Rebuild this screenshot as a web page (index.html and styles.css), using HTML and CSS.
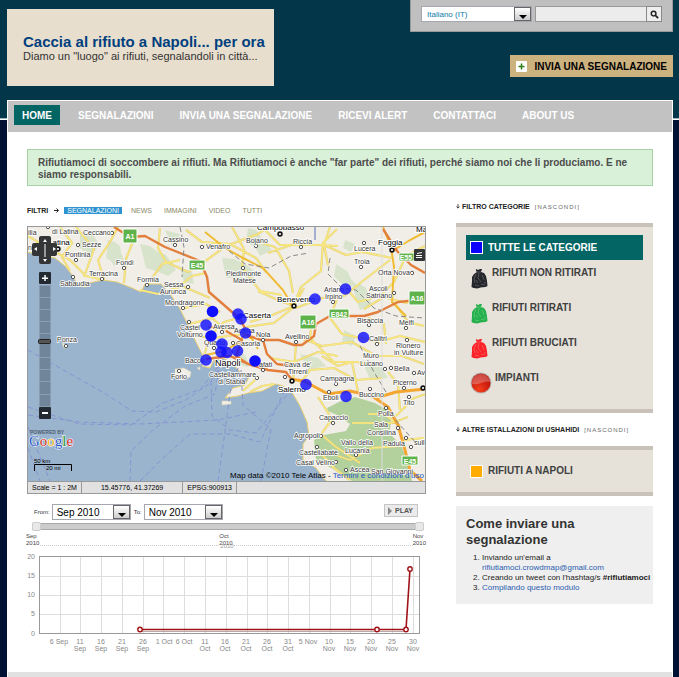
FILE: index.html
```html
<!DOCTYPE html>
<html lang="it">
<head>
<meta charset="utf-8">
<title>Caccia al rifiuto a Napoli</title>
<link rel="stylesheet" href="styles.css">
</head>
<body>
<header class="header">
  <div class="banner">
    <h1>Caccia al rifiuto a Napoli... per ora</h1>
    <p>Diamo un "luogo" ai rifiuti, segnalandoli in città...</p>
  </div>
  <div class="tools">
    <form class="searchbar">
      <span class="pick lang"><select aria-label="Lingua"><option>Italiano (IT)</option></select><i class="arrow"></i></span>
      <span class="search"><input type="text" aria-label="Cerca"><button type="button" aria-label="Cerca"><svg viewBox="0 0 10 10" width="9" height="9"><circle cx="4" cy="4" r="2.6" fill="none" stroke="#222" stroke-width="1.6"/><path d="M6 6l3 3" stroke="#222" stroke-width="2"/></svg></button></span>
    </form>
    <a class="submit" href="#"><svg viewBox="0 0 11 11" width="11" height="11"><rect width="11" height="11" rx="1" fill="#fff"/><path d="M5.500 2.500v6M2.500 5.500h6" stroke="#2f7d16" stroke-width="1.500"/></svg>INVIA UNA SEGNALAZIONE</a>
  </div>
</header>
<div class="page">
  <nav class="nav">
    <a class="on" href="#">HOME</a><a href="#">SEGNALAZIONI</a><a href="#">INVIA UNA SEGNALAZIONE</a><a href="#">RICEVI ALERT</a><a href="#">CONTATTACI</a><a href="#">ABOUT US</a>
  </nav>
  <p class="notice">Rifiutiamoci di soccombere ai rifiuti. Ma Rifiutiamoci è anche "far parte" dei rifiuti, perché siamo noi che li produciamo. E ne siamo responsabili.</p>
  <div class="columns">
    <main class="main">
      <div class="filters"><strong>FILTRI</strong><svg class="tick" viewBox="0 0 5 5" width="5" height="5"><path d="M0 2.500h4M2.500 0.500l2 2l-2 2" stroke="#222" fill="none"/></svg><a class="on" href="#">SEGNALAZIONI</a><a href="#">NEWS</a><a href="#">IMMAGINI</a><a href="#">VIDEO</a><a href="#">TUTTI</a></div>
      <div class="map">
        <svg class="mapart" viewBox="28 227 397 254">
          <defs>
            <g id="roads">
              <path d="M28 236l20 12 22 12 16 16 18 4M60 227l12 16-10 14 8 14M76 227l18 22-10 28M104 280l-6-20 12-18 8-15M124 283l2-24 8-20M160 228l-2 20 8 14 22 10 14-8M148 284l14-20 18-4M172 292l20-16 14-3M140 290l18 4 24-8 28 12M184 308l22-4 14 8M190 324l22-6 16 14M196 336l18 2 28-4M204 356l6-20 14-14 14-4M186 230l16 12 28 2 26 14 10 14M204 262l22-16 32-12 10-7M232 227l12 22-2 18 18 24 22 4M255 241l20 6 14 24 4 22M258 291l22 10 14 5M293 307l8-20 20-16 2-28 14-14M250 322l20-6 24-10 10-18M296 308l26-10 22-2 20-16 26-20M294 307l-20 16-28 4M262 227l18 18 44 0 22 10 16-3 30 6M268 253l26-9 44 2M330 227l-6 18 4 20M346 288l12 14 22-6 14-14 12-26 19-10M364 309l20-12 22 6 18-8M338 296l-8 22 12 16 36 8 22-6 25 6M394 302l14 20 16 4M368 318l16 6 2 20M300 338l22 8 30-4 24 14 26 0 22 8M312 318l-2 20 24 24 22 0 22 4M322 356l16 10 14-4 6 30M270 358l24 4 24-10 20 4M300 384l10-14 24-2 22 12 26-2M296 345l-3 36M318 397l14 22-10 14M352 423l40 0 16-6M396 416l18-18 12-4M322 435l14 12 24 16M338 456l12 4 22-12 28-2M318 450l16 18 16 12M388 372l10 12 2 26M368 414l16 0 16 12M404 440l20-2M250 392l12-6 12-2M243 391l12-11"/>
            </g>
          </defs>
          <rect x="28" y="227" width="397" height="254" fill="#f1eee7"/>
          <g fill="#c8dcbb" opacity=".6">
            <path d="M80 232l8 1 6 3 6 10-3 2-5 6-7-2-5-4zM108 240l7 2 5 4 1 7 3 7-10 6-3-5-5-3zM140 244l10 2 8 6 8 3 10 15-8 6-12-5-10-3zM165 230l14 4 6 8-14 2zM222 258l12 1 14 7 10 8-12 10-9-6-11 0zM248 228l8 2 4 6 12 14-12 6-5-9-9-5zM336 264l12 8 3 7 5 5-10 4-7-7-5-5zM352 284l8 0 6 4 6 18-12 4-3-8zM345 240l10 4-4 8-8-4zM344 330l12 6-4 10-10-4zM300 354l18 4 8 8-18 4zM362 360l18 6 8 12-18 2zM235 350l10 5 4 9-2 3-10-3-4-8zM180 268l12 4 2 12-10-2z"/>
          </g>
          <path fill="#b3d19c" d="M327 408l12-6 16-5 20 6 14 8 2 12-2 10 12 12 8 20 3 16h-60l-17-11-19-10-2-20 10-5 22-4 4-7-13-9-9-4z"/>
          <path fill="#9bb4ce" stroke="#e8cf72" stroke-width="1" stroke-linejoin="round" d="M27 252l28 6 10 8 8 10 5 10 8 1 3-4 14-3 14 2 15 6 9 4 4-8 16 0 9 10 9 13 10 20 7 15 8 16-2 8 8 2 4-8 9-2 9 5 8 9 9 5-4 8-12 3-8 10 13-2 10-3 14-2 14-7 7 2 10 8 7 12 7 16 2 14-6 8 0 16 13 8 8 11 14 10H27z"/>
          <path fill="#f1eee7" stroke="#e2d7ab" stroke-width=".5" d="M175 369l9-1 7 4-1 5-8 3-7-3zM222 401l9 0 0 3-9 1zM62 343l3 1 2 4-3 0zM197 368l3-1 0 3z"/>
          <g fill="none" stroke="#8795d0" stroke-width="1" stroke-dasharray="5 3">
            <path d="M28 350L104 393l28 18 24 1 30-12 24-17 12-20M28 407l51 17 52 1 32-22 38-14 18-24M28 415l52 7 60 2 78-4 38-8M130 481l1-30 22-21 32-24 30-12 4-25M140 481l20-20 30-27 40 0 30 8 26-54M28 448l12 33M28 427l22 54M211 381l1 35 18 14 26 3 34-42M218 481l6-42 6-46 8-25M241 370l2 35 28 24-10 52"/>
          </g>
          <g fill="none" stroke="#e0cc7c" stroke-width="2.200" stroke-linejoin="round"><use href="#roads"/></g>
          <g fill="none" stroke="#fae97e" stroke-width="1.300" stroke-linejoin="round"><use href="#roads"/></g>
          <path fill="none" stroke="#f0bb35" stroke-width="2" d="M205 232l20 16 18 10 20 10 20 22 6 10 4 8M383 227l8 20 3 20-2 35 14 14M394 250l16-10 15-8M208 327l28 2 16 10 6 10M206 355l18-4 14-8 10-12"/>
          <g fill="none" stroke="#e27f3d" stroke-width="2.400" stroke-linejoin="round">
            <path d="M114 227l16 10 15-1 20 11 35 14 7 16 2 15 15 13 16 14 9 17 12 4 18 0 15 5 8 0 12-9 2-12 14-8 34 0 14-4 20-10 20-2 20-3M226 331l16 9-6 16 12 8 20 6 18 2 6 8M263 340l4 14 10 10 14 2M383 229l14 22 14 14 14 8M206 359l24-3 18 8"/>
          </g>
          <path fill="none" stroke="#f3a632" stroke-width="3" stroke-linejoin="round" d="M290 379l14 2 24 13 22-3 22 5 16 11 10 18 7 25 5 20 12 11M376 398l20-6 29-3"/>
          <path fill="none" stroke="#888" stroke-width="1" stroke-dasharray="5 3" d="M180 227l4 20-2 30M223 246l22 18 24 4 22-12 18-3M330 258l-2 16 14 14 14 2 18 18 22 8 28 2M360 346l14 26 12 20M386 407l12 16 20 22"/>
          <path stroke="#ddd" d="M382 227v254"/>
          <path stroke="#5571b8" d="M315 227v13"/>
          <g class="shield">
            <g fill="#5fb34a" stroke="#fff"><path d="M123 229h14v14h-14zM189 260h16v10h-16zM329 309h20v9h-20zM300 315h16v14h-16zM399 253h15v8h-15zM409 291h16v14h-16zM402 456h16v9h-16z"/></g>
            <text x="130" y="239">A1</text><text x="197" y="268">E45</text><text x="339" y="317">E842</text><text x="308" y="325">A16</text><text x="406" y="260">E55</text><text x="417" y="301">A16</text><text x="410" y="464">E45</text>
          </g>
          <g fill="#fff" stroke="#555">
            <circle cx="78" cy="245" r="1.700"/><circle cx="48" cy="227" r="1.700"/><circle cx="112" cy="233" r="1.700"/><circle cx="76" cy="260" r="1.700"/><circle cx="124" cy="268" r="1.700"/><circle cx="102" cy="279" r="1.700"/><circle cx="73" cy="277" r="1.700"/><circle cx="147" cy="285" r="1.700"/><circle cx="175" cy="245" r="1.700"/><circle cx="202" cy="247" r="1.700"/><circle cx="188" cy="287" r="1.700"/><circle cx="183" cy="308" r="1.700"/><circle cx="189" cy="322" r="1.700"/><circle cx="222" cy="332" r="1.700"/><circle cx="256" cy="246" r="1.700"/><circle cx="301" cy="247" r="1.700"/><circle cx="243" cy="268" r="1.700"/><circle cx="364" cy="243" r="1.700"/><circle cx="361" cy="267" r="1.700"/><circle cx="412" cy="273" r="1.700"/><circle cx="394" cy="293" r="1.700"/><circle cx="333" cy="302" r="1.700"/><circle cx="369" cy="325" r="1.700"/><circle cx="406" cy="328" r="1.700"/><circle cx="377" cy="344" r="1.700"/><circle cx="407" cy="340" r="1.700"/><circle cx="263" cy="340" r="1.700"/><circle cx="296" cy="342" r="1.700"/><circle cx="66" cy="346" r="1.700"/><circle cx="179" cy="371" r="1.700"/><circle cx="263" cy="370" r="1.700"/><circle cx="285" cy="377" r="1.700"/><circle cx="257" cy="378" r="1.700"/><circle cx="336" cy="384" r="1.700"/><circle cx="329" cy="392" r="1.700"/><circle cx="370" cy="389" r="1.700"/><circle cx="385" cy="369" r="1.700"/><circle cx="391" cy="368" r="1.700"/><circle cx="414" cy="373" r="1.700"/><circle cx="404" cy="388" r="1.700"/><circle cx="409" cy="397" r="1.700"/><circle cx="386" cy="408" r="1.700"/><circle cx="333" cy="423" r="1.700"/><circle cx="321" cy="436" r="1.700"/><circle cx="317" cy="447" r="1.700"/><circle cx="336" cy="462" r="1.700"/><circle cx="346" cy="470" r="1.700"/><circle cx="356" cy="455" r="1.700"/><circle cx="398" cy="428" r="1.700"/><circle cx="406" cy="438" r="1.700"/><circle cx="411" cy="447" r="1.700"/><circle cx="233" cy="343" r="1.700"/><circle cx="214" cy="348" r="1.700"/>
            <g stroke="#111" stroke-width="1.600"><circle cx="58" cy="249" r="1.900"/><circle cx="280" cy="234" r="1.900"/><circle cx="392" cy="250" r="1.900"/><circle cx="294" cy="306" r="1.900"/><circle cx="292" cy="381" r="1.900"/><circle cx="423" cy="388" r="1.900"/></g>
          </g>
          <g class="town">
            <text x="52" y="234">di Latina</text><text x="83" y="235">Ceccano</text><text x="82" y="247">Sezze</text><text x="65" y="257">Pontinia</text><text x="116" y="265">Fondi</text><text x="89" y="276">Terracina</text><text x="60" y="286">Sabaudia</text><text x="137" y="282">Formia</text><text x="163" y="242">Cassino</text><text x="206" y="249">Venafro</text><text x="164" y="287">Sessa</text><text x="160" y="294">Aurunca</text><text x="165" y="305">Mondragone</text><text x="180" y="330">Castel</text><text x="177" y="337">Volturno</text><text x="213" y="329">Aversa</text><text x="204" y="345">Quarto</text><text x="57" y="342">Ponza</text><text x="246" y="243">Bojano</text><text x="293" y="244">Riccia</text><text x="226" y="276">Piedimonte</text><text x="233" y="283">Matese</text><text x="354" y="251">Lucera</text><text x="354" y="264">Troia</text><text x="378" y="275">Orta Nova</text><text x="369" y="291">Ascoli</text><text x="366" y="298">Satriano</text><text x="324" y="292">Ariano</text><text x="325" y="299">Irpino</text><text x="357" y="323">Bisaccia</text><text x="399" y="325">Melfi</text><text x="369" y="341">Calitri</text><text x="396" y="348">Rionero</text><text x="394" y="355">in Vulture</text><text x="256" y="337">Nola</text><text x="234" y="333">Acerra</text><text x="236" y="346">Casoria</text><text x="285" y="339">Avellino</text><text x="363" y="358">Muro</text><text x="360" y="366">Lucano</text><text x="394" y="371">Bella</text><text x="417" y="375">Av</text><text x="393" y="385">Picerno</text><text x="403" y="405">Tito</text><text x="185" y="363">Bacoli</text><text x="171" y="379">Forio</text><text x="209" y="377">Castellammare</text><text x="218" y="384">di Stabia</text><text x="259" y="367">afati</text><text x="284" y="367">Cava de'</text><text x="288" y="374">Tirreni</text><text x="320" y="381">Campagna</text><text x="323" y="400">Eboli</text><text x="359" y="397">Buccino</text><text x="378" y="416">Polla</text><text x="319" y="420">Capaccio</text><text x="374" y="427">Sala</text><text x="367" y="435">Consilina</text><text x="294" y="438">Agropoli</text><text x="341" y="445">Vallo della</text><text x="345" y="453">Lucania</text><text x="383" y="446">Padula</text><text x="299" y="455">Castellabate</text><text x="296" y="465">Casal Velino</text><text x="350" y="472">Ascea</text><text x="371" y="474">San Giovanni</text><text x="414" y="445">sull</text><text x="28" y="235">ilia</text><text x="28" y="250">no</text>
          </g>
          <g class="city"><text x="48" y="245">Latina</text><text x="257" y="230">Campobasso</text><text x="378" y="245">Foggia</text><text x="277" y="302">Benevento</text><text x="243" y="318">Caserta</text><text x="278" y="392">Salerno</text><text x="416" y="232">Ma</text><text class="big" x="215" y="366">Napoli</text></g>
          <g fill="#1010ff" fill-opacity=".82">
            <circle cx="212.500" cy="311.500" r="5.800" fill-opacity="1"/><circle cx="206" cy="325" r="5.800"/><circle cx="211" cy="336" r="5.800" fill-opacity="1"/><circle cx="238" cy="314" r="5.800"/><circle cx="241" cy="319" r="5.800"/><circle cx="245.500" cy="333" r="5.800"/><circle cx="222" cy="344" r="5.800"/><circle cx="221" cy="352" r="5.800"/><circle cx="227" cy="352.500" r="5.800"/><circle cx="237.500" cy="351" r="5.800"/><circle cx="206" cy="360" r="5.800"/><circle cx="255" cy="361" r="5.800" fill-opacity="1"/><circle cx="315" cy="299" r="5.800"/><circle cx="345.500" cy="289" r="5.800"/><circle cx="363.500" cy="337.500" r="5.800"/><circle cx="306" cy="384.500" r="5.800"/><circle cx="346" cy="396.500" r="5.800"/>
          </g>
          <g fill="#333537"><rect x="39" y="236" width="12" height="28" rx="2"/><rect x="32" y="243" width="25" height="13" rx="2"/><rect x="414" y="249" width="11" height="12" rx="1"/><rect x="39" y="272" width="12" height="12" rx="1" fill="#242a32"/><rect x="39" y="407" width="12" height="12" rx="1" fill="#242a32"/></g>
          <path fill="#fff" d="M43 242l2-3 2 3zM43 259l2 3 2-3zM37 247v4l-3-2zM53 247v4l3-2zM44.500 244h1v13h-1zM42 277.500h6v1.500h-6zM44.300 275h1.500v6h-1.500zM42 412h6v2h-6z"/>
          <path stroke="#fff" stroke-width="1" fill="none" d="M417 253.500l5-1M416 255.500h6M416 257.500h6"/>
          <path fill="#71859a" stroke="#879cb1" d="M39.500 285.500h11v121h-11z"/>
          <path stroke="#8ca0b4" d="M39 297.500h12M39 309.500h12M39 321.500h12M39 333.500h12M39 357.500h12M39 369.500h12M39 381.500h12M39 394.500h12"/>
          <rect x="38.500" y="339.500" width="12" height="4" rx="1" fill="#555" stroke="#222"/>
          <text class="powered" x="30" y="434">POWERED BY</text>
          <text class="google" x="29" y="446"><tspan fill="#2a58c7">G</tspan><tspan fill="#d62b20">o</tspan><tspan fill="#efb810">o</tspan><tspan fill="#2a58c7">g</tspan><tspan fill="#28973a">l</tspan><tspan fill="#d62b20">e</tspan></text>
          <path fill="none" stroke="#000" d="M34.500 471v-6.500h37v6.500"/>
          <text class="scale" x="34" y="463">50 km</text><text class="scale" x="46" y="470">20 mi</text>
          <text class="credit" x="424" y="478">Map data ©2010 Tele Atlas - <tspan>Termini e condizioni d'uso</tspan></text>
        </svg>
        <div class="status"><span>Scale = 1 : 2M</span><span class="wide">15.45776, 41.37269</span><span>EPSG:900913</span></div>
      </div>
      <form class="dates">
        <label for="from">From:</label><span class="pick"><select id="from"><option>Sep 2010</option></select><i class="arrow"></i></span>
        <label for="to">To:</label><span class="pick"><select id="to"><option>Nov 2010</option></select><i class="arrow"></i></span>
        <button class="play" type="button"><i></i>PLAY</button>
      </form>
      <div class="slider"><input type="range" aria-label="Inizio" value="0"><input type="range" aria-label="Fine" value="100"></div>
      <div class="months"><span>Sep<br>2010</span><span>Oct<br>2010<em>2010</em></span><span>Nov<br>2010</span></div>
      <svg class="chart" viewBox="27 552 399 104">
        <path fill="none" stroke="#ddd" d="M60.500 557v76M80.500 557v76M101.500 557v76M122.500 557v76M143.500 557v76M163.500 557v76M184.500 557v76M205.500 557v76M226.500 557v76M247.500 557v76M267.500 557v76M288.500 557v76M309.500 557v76M330.500 557v76M350.500 557v76M371.500 557v76M392.500 557v76M413.500 557v76M40 576.500h379M40 595.500h379M40 614.500h379"/>
        <rect x="39.500" y="556.500" width="380" height="77" fill="none" stroke="#999"/>
        <g fill="none"><path stroke="#b9a9a9" d="M140 631.500h266"/><path stroke="#a11217" stroke-width="1.600" d="M140 629.500h266l4-60.500"/></g>
        <g fill="#fff" stroke="#a11217" stroke-width="1.400"><circle cx="140" cy="629.500" r="2.200"/><circle cx="377" cy="629.500" r="2.200"/><circle cx="406" cy="629.500" r="2.200"/><circle cx="410" cy="569" r="2.200"/></g>
        <g class="axis yaxis"><text x="35" y="559">20</text><text x="35" y="578">15</text><text x="35" y="597">10</text><text x="35" y="616">5</text><text x="35" y="636">0</text></g>
        <g class="axis">
          <text x="59" y="644">6 Sep</text><text x="80" y="644">11</text><text x="80" y="651">Sep</text><text x="101" y="644">16</text><text x="101" y="651">Sep</text><text x="122" y="644">21</text><text x="122" y="651">Sep</text><text x="143" y="644">26</text><text x="143" y="651">Sep</text><text x="164" y="644">1 Oct</text><text x="184" y="644">6 Oct</text><text x="205" y="644">11</text><text x="205" y="651">Oct</text><text x="225" y="644">16</text><text x="225" y="651">Oct</text><text x="246" y="644">21</text><text x="246" y="651">Oct</text><text x="267" y="644">26</text><text x="267" y="651">Oct</text><text x="288" y="644">31</text><text x="288" y="651">Oct</text><text x="308" y="644">5 Nov</text><text x="329" y="644">10</text><text x="329" y="651">Nov</text><text x="350" y="644">15</text><text x="350" y="651">Nov</text><text x="371" y="644">20</text><text x="371" y="651">Nov</text><text x="392" y="644">25</text><text x="392" y="651">Nov</text><text x="413" y="644">30</text><text x="413" y="651">Nov</text>
        </g>
      </svg>
    </main>
    <aside class="side">
      <div class="sidehead"><svg class="tick" viewBox="0 0 5 6" width="4" height="5"><path d="M2.500 0v5M0.500 3l2 2l2-2" stroke="#222" fill="none"/></svg><strong>FILTRO CATEGORIE</strong><a href="#">[NASCONDI]</a></div>
      <ul class="cats">
        <li><a class="on" href="#"><i class="swatch blue"></i>TUTTE LE CATEGORIE</a></li>
        <li><a href="#"><svg class="bag black" viewBox="0 0 17 21" width="17" height="21"><use href="#bag"/></svg>RIFIUTI NON RITIRATI</a></li>
        <li><a href="#"><svg class="bag green" viewBox="0 0 17 21" width="17" height="21"><use href="#bag"/></svg>RIFIUTI RITIRATI</a></li>
        <li><a href="#"><svg class="bag red" viewBox="0 0 17 21" width="17" height="21"><use href="#bag"/></svg>RIFIUTI BRUCIATI</a></li>
        <li><a href="#"><svg class="ball" viewBox="0 0 22 22" width="22" height="22"><defs><radialGradient id="glow" cx=".4" cy=".85" r=".8"><stop offset="0" stop-color="#f5401c"/><stop offset="1" stop-color="#b80d08"/></radialGradient><g id="bag"><path d="M5 1l2 1 2-1 2 0-1 3 3 1 2 3 1 5 .5 5-2 1-5 .5-3 1-4-.5-2-1 .5-6 0-4 2-3 3-2-1-1z"/><path d="M5 6l-2 5 1 4M8 5l-1 5 3 4M11 7l2 5M4 17l4 1M10 16l4 1M6 4h4M5 12l2 3M13 14l2 1" fill="none" stroke="#fff" stroke-opacity=".28" stroke-width=".8"/></g></defs><circle cx="11" cy="11" r="10.500" fill="#b9b5b0"/><circle cx="11" cy="11" r="9.500" fill="url(#glow)"/><path d="M2 12a9 9 0 0 1 18-2q-4-1-9 1t-9 1z" fill="#fff" opacity=".25"/></svg>IMPIANTI</a></li>
      </ul>
      <div class="sidehead"><svg class="tick" viewBox="0 0 5 6" width="4" height="5"><path d="M2.500 0v5M0.500 3l2 2l2-2" stroke="#222" fill="none"/></svg><strong>ALTRE ISTALLAZIONI DI USHAHIDI</strong><a href="#">[NASCONDI]</a></div>
      <ul class="cats other"><li><a href="#"><i class="swatch orange"></i>RIFIUTI A NAPOLI</a></li></ul>
      <section class="how">
        <h2>Come inviare una segnalazione</h2>
        <ol><li>Inviando un'email a<br><a href="#">rifiutiamoci.crowdmap@gmail.com</a></li><li>Creando un tweet con l'hashtag/s <b>#rifiutiamoci</b></li><li><a href="#">Compilando questo modulo</a></li></ol>
      </section>
    </aside>
  </div>
  <footer class="footer"></footer>
</div>
</body>
</html>
```

FILE: styles.css
```css
* { box-sizing: border-box; }
body {
  margin: 0;
  padding: 0 6px 0 7px;
  font-family: "Liberation Sans", Arial, sans-serif;
  font-size: 11px;
  color: #333;
  background: linear-gradient(#04364a 118px, #9fb4bd 118px, #9fb4bd 119px, #fff 119px, #fff 120px, #001233 120px) no-repeat #001233;
  overflow-x: hidden;
}
h1, h2, p, ul, ol { margin: 0; padding: 0; }
a { text-decoration: none; color: inherit; }
ul { list-style: none; }

.header { display: flex; justify-content: space-between; align-items: flex-start; height: 100px; }
.banner { margin-top: 9px; height: 77px; padding: 24px 9px 0 16px; background: #e7dece; }
.banner h1 { font-size: 15px; line-height: 17px; color: #003f7d; }
.banner p { font-size: 11px; line-height: 12px; }
.tools { display: flex; flex-direction: column; align-items: flex-end; gap: 23px; }
.searchbar {
  display: flex; gap: 3px; align-items: flex-start; height: 32px; padding: 6px 10px;
  background: #bfbfbf; border: 1px solid #999; border-top: 0;
}
.pick { position: relative; display: inline-flex; }
.pick select {
  appearance: none; width: 79px; height: 16px; padding: 0 4px; border: 1px solid #a6a6ae; border-radius: 0;
  background: #fff; font: 10px "Liberation Sans", Arial, sans-serif; color: #000;
}
.pick.lang select { width: 111px; padding: 0 5px; font-size: 8px; color: #0b7ba8; }
.arrow {
  position: absolute; top: 1px; right: 1px; width: 17px; height: 14px; pointer-events: none;
  border: 1px solid #666; background: linear-gradient(#fff, #ccc);
}
.arrow::after {
  content: ""; position: absolute; left: 4px; bottom: 1px;
  border: 4px solid transparent; border-top-color: #000; border-bottom: 0;
}
.search { display: flex; height: 16px; }
.search input { width: 112px; padding: 0 4px; border: 1px solid #999; background: #ececec; font-size: 9px; }
.search button { width: 16px; padding: 0; margin-left: -1px; border: 1px solid #888; background: #eee; display: grid; place-items: center; }
.submit {
  display: flex; align-items: center; gap: 7px; height: 22px; padding: 0 6px;
  background: #ccb27f; color: #000; font-size: 10px; font-weight: bold;
}

.page { border: 1px solid #fff; border-bottom: 0; background: #fff; }
.nav { display: flex; gap: 10px; height: 31px; padding: 4px 6px; background: #c2c2c2; }
.nav a { height: 20px; padding: 0 8px; line-height: 21px; font-size: 10px; font-weight: bold; color: #fff; white-space: nowrap; }
.nav .on { background: #036564; }
.notice {
  margin: 17px 19px 0; padding: 7px 6px 4px 10px; border: 1px solid #a5d1a5; background: #d9f0d9;
  font-size: 10px; line-height: 12px; font-weight: bold; color: #4d4d4d;
}
.columns { display: flex; gap: 30px; padding: 0 19px; }
.main { flex: 1; min-width: 0; padding-top: 18px; }
.side { flex: 0 0 197px; padding-top: 16px; }

.filters { display: flex; align-items: center; height: 12px; margin-bottom: 10px; font-size: 7px; color: #888866; }
.filters strong { color: #222; }
.filters .tick { margin: 0 5px 0 6px; }
.filters a { margin-right: 6px; padding: 0 3px; line-height: 7px; }
.filters .on { background: #2e93cf; color: #fff; }

.map { border: 1px solid #999; }
.mapart { display: block; width: 100%; height: auto; font-family: "Liberation Sans", Arial, sans-serif; }
.town { font-size: 7px; fill: #333; stroke: #fff; stroke-width: 1.5px; paint-order: stroke; }
.city { font-size: 8px; fill: #000; stroke: #fff; stroke-width: 2px; paint-order: stroke; }
.big { font-size: 9px; }
.shield { font-size: 7px; font-weight: bold; fill: #fff; text-anchor: middle; }
.powered { font-size: 5px; font-weight: bold; fill: #4f5f72; }
.google { font-family: "Liberation Serif", serif; font-size: 15px; stroke: #fff; stroke-width: 1px; paint-order: stroke; }
.scale { font-size: 6px; }
.credit { font-size: 8px; text-anchor: end; }
.credit tspan { fill: #2556c4; }
.status { display: flex; height: 12px; border-top: 1px solid #999; background: #e1e1e1; font-size: 7px; line-height: 11px; color: #000; }
.status span { padding: 0 4px; border-right: 1px solid #999; }
.status .wide { padding: 0 19px; }

.dates { display: flex; align-items: center; height: 16px; margin: 10px 8px 0 7px; }
.dates label { font-size: 6px; margin-right: 2px; }
.dates .pick { margin-right: 3px; }
.play {
  display: flex; align-items: center; gap: 3px; height: 13px; margin: 0 0 3px auto; padding: 0 4px 0 3px;
  border: 1px solid #c5c5c5; background: #ebebeb; font: bold 7px "Liberation Sans", Arial, sans-serif; color: #555;
}
.play i { border: 4px solid transparent; border-left-color: #888; border-right: 0; }

.slider { display: grid; height: 9px; margin: 2px 2px 0 5px; align-items: center; background: linear-gradient(transparent 1px, #aaa 1px, #aaa 2px, #ccc 2px, #ccc 7px, #aaa 7px, #aaa 8px, transparent 8px); }
.slider input { grid-area: 1 / 1; appearance: none; width: 100%; height: 9px; margin: 0; background: none; pointer-events: none; }
.slider input::-webkit-slider-thumb { appearance: none; width: 9px; height: 9px; border: 1px solid #ccc; border-radius: 2px; background: #e8e8e8; pointer-events: auto; }
.months {
  display: flex; justify-content: space-between; height: 19px; margin: 2px 0 0 -1px;
  font-size: 6px; line-height: 7px; color: #444;
  background: linear-gradient(90deg, #ccc 50%, transparent 50%) 8px 12px / 2px 1px repeat-x;
}
.months span { position: relative; background: #fff; height: 15px; }
.months em { position: absolute; left: 1px; top: 10px; font-style: normal; color: #999; }
.chart { display: block; width: 100%; height: auto; }
.axis { font-size: 7px; fill: #888; text-anchor: middle; }
.yaxis { text-anchor: end; }

.sidehead { display: flex; align-items: center; height: 9px; font-size: 7px; color: #222; }
.sidehead .tick { margin-right: 2px; }
.sidehead a { margin-left: 5px; font-size: 6px; letter-spacing: 1px; color: #666; }
.cats { margin: 12px 0; padding: 8px 10px 10px; border: solid #c8c2bb; border-width: 4px 0; background: #e6e2da; }
.cats a { display: flex; height: 35px; padding: 5px 6px 0; gap: 5px; font-size: 10px; line-height: 12px; font-weight: bold; color: #404040; }
.cats li:last-child a { height: 32px; }
.cats .on { height: 25px; padding: 0 4px; margin-bottom: 2px; align-items: center; background: #036564; color: #fff; }
.swatch { width: 13px; height: 13px; border: 1px solid #fff; }
.blue { background: #0c00ff; }
.orange { background: #ffab00; }
.bag { flex: none; margin: 1px -1px 0; }
.bag.black { fill: #25262c; }
.bag.green { fill: #24b14c; }
.bag.red { fill: #fb2228; }
.ball { flex: none; margin: 0 -2px; }
.cats.other { margin: 12px 0 10px; padding: 8px 10px; }
.cats.other li a { height: 26px; padding: 0 4px; align-items: center; }
.how { padding: 10px 2px 11px 10px; background: #efefef; }
.how h2 { padding-right: 8px; font-size: 13px; line-height: 16px; }
.how ol { margin-top: 5px; padding-left: 16px; font-size: 8px; line-height: 10px; color: #222; }
.how ol a { color: #2a5db0; }
.footer { height: 30px; margin-top: 16px; background: #e1e1e1; }
```
